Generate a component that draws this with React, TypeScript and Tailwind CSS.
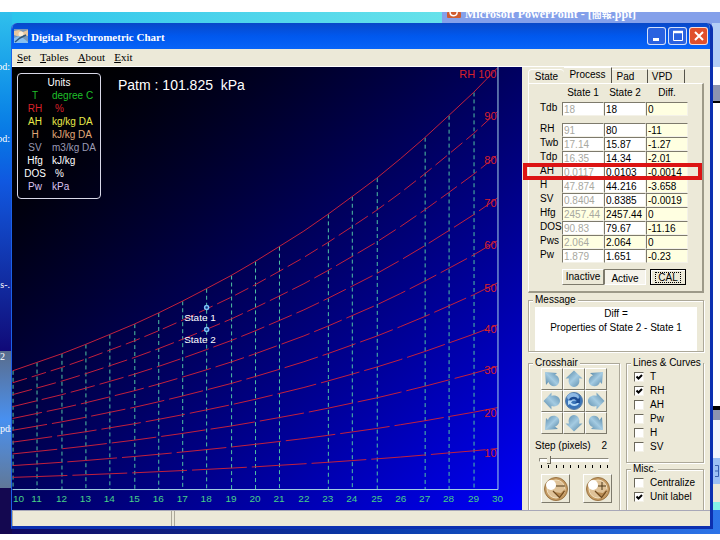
import { useState } from "react";
import type { ReactNode } from "react";
import clsx from "clsx";

const units = [
  { name: "T", unit: "degree C", color: "text-[#1fbf2a]" },
  { name: "RH", unit: "%", color: "text-[#d8222a]" },
  { name: "AH", unit: "kg/kg DA", color: "text-[#e8e84a]" },
  { name: "H", unit: "kJ/kg DA", color: "text-[#e0a878]" },
  { name: "SV", unit: "m3/kg DA", color: "text-[#9a9ab4]" },
  { name: "Hfg", unit: "kJ/kg", color: "text-white" },
  { name: "DOS", unit: "%", color: "text-white" },
  { name: "Pw", unit: "kPa", color: "text-[#dcc4f0]" },
];

const rows = [
  { name: "Tdb", values: ["18", "18", "0"], derived: false },
  { name: "RH", values: ["91", "80", "-11"], derived: false },
  { name: "Twb", values: ["17.14", "15.87", "-1.27"], derived: false },
  { name: "Tdp", values: ["16.35", "14.34", "-2.01"], derived: false },
  { name: "AH", values: ["0.0117", "0.0103", "-0.0014"], derived: false },
  { name: "H", values: ["47.874", "44.216", "-3.658"], derived: false },
  { name: "SV", values: ["0.8404", "0.8385", "-0.0019"], derived: false },
  { name: "Hfg", values: ["2457.44", "2457.44", "0"], derived: true },
  { name: "DOS", values: ["90.83", "79.67", "-11.16"], derived: false },
  { name: "Pws", values: ["2.064", "2.064", "0"], derived: true },
  { name: "Pw", values: ["1.879", "1.651", "-0.23"], derived: false },
];

const rhLevels = [10, 20, 30, 40, 50, 60, 70, 80, 90, 100];
const rhLabelY = [391, 351, 308, 267, 226, 182, 140, 97, 53, 11];
const temps = Array.from({ length: 21 }, (_, i) => i + 10);

const AXIS_Y = 423;

const tempX = (t: number) => Math.round((t - 10) * 24.3);

// humidity ratio at the given temperature and relative humidity
const humidityY = (t: number, rh: number) => {
  const p = (rh / 100) * 610.94 * Math.exp((17.625 * t) / (t + 243.04));
  const w = (0.622 * p) / (101325 - p);
  return AXIS_Y - w / 0.0000643;
};

const curvePoints = (rh: number) =>
  temps.map((t) => `${tempX(t)},${humidityY(t, rh).toFixed(1)}`).join(" ");

const raised =
  "border border-t-white border-l-white border-r-[#7d7a6c] border-b-[#7d7a6c] bg-[#ece9d8]";

function Chart() {
  return (
    <svg
      viewBox="0 0 510 444"
      className="block h-full w-full"
      fontFamily="'Liberation Sans', Arial, sans-serif"
    >
      {temps
        .filter((t) => t !== 22 && t !== 26 && t !== 30)
        .map((t) => (
          <line
            key={t}
            x1={tempX(t) + 0.5}
            x2={tempX(t) + 0.5}
            y1={humidityY(t, 100)}
            y2={AXIS_Y}
            stroke="#4fc3a4"
            strokeDasharray="4 3"
          />
        ))}
      {rhLevels.map((rh) => (
        <polyline
          key={rh}
          points={curvePoints(rh)}
          fill="none"
          stroke="#c4203c"
          strokeDasharray={rh === 100 ? "none" : `${60 - rh / 2} 5`}
          strokeWidth="1"
        />
      ))}
      <path d={`M0 ${AXIS_Y + 0.5}H486.5V0`} fill="none" stroke="#a8d4e4" />
      {rhLevels.map((rh, i) => (
        <text
          key={rh}
          x="485"
          y={rhLabelY[i]}
          fontSize="11"
          fill="#d8202c"
          textAnchor="end"
        >
          {rh === 100 ? "RH 100" : rh}
        </text>
      ))}
      {temps.map((t) => (
        <text
          key={t}
          x={t === 10 ? 6 : tempX(t)}
          y="436"
          fontSize="10"
          fill="#48d088"
          textAnchor="middle"
        >
          {t}
        </text>
      ))}
      {[
        { label: "State 1", y: 241 },
        { label: "State 2", y: 263 },
      ].map((s) => (
        <g key={s.label}>
          <circle cx="194.5" cy={s.y} r="2" fill="#103080" stroke="#7cc0f8" strokeWidth="1.5" />
          <text x="172" y={s.y + 14} fontSize="10" fill="#ffffff">
            {s.label}
          </text>
        </g>
      ))}
    </svg>
  );
}

function UnitsBox() {
  return (
    <div className="absolute top-[6px] left-[5px] h-[126px] w-[84px] rounded border border-[#d8d8e8] text-[10px] leading-[13px]">
      <p className="mt-[2px] text-center text-white">Units</p>
      <dl>
        {units.map((u) => (
          <div key={u.name} className={clsx("grid grid-cols-[34px_1fr]", u.color)}>
            <dt className="text-center">{u.name}</dt>
            <dd className={clsx("whitespace-nowrap", u.unit === "%" && "pl-[3px]")}>{u.unit}</dd>
          </div>
        ))}
      </dl>
    </div>
  );
}

function GroupBox({
  title,
  className,
  children,
}: {
  title: string;
  className?: string;
  children: ReactNode;
}) {
  return (
    <fieldset
      className={clsx(
        "min-w-0 border border-[#aca899] shadow-[1px_1px_0_#fff,inset_1px_1px_0_#fff]",
        className
      )}
    >
      <legend className="ml-1 h-[10px] bg-[#ece9d8] px-[2px] leading-[10px] whitespace-nowrap">{title}</legend>
      {children}
    </fieldset>
  );
}

function ValuesTable() {
  return (
    <table className="ml-[11px] table-fixed border-collapse">
      <thead>
        <tr className="h-[18px]">
          <th className="w-[22px]"></th>
          <th className="w-[42px] font-normal">State 1</th>
          <th className="w-[42px] font-normal">State 2</th>
          <th className="w-[42px] font-normal">Diff.</th>
        </tr>
      </thead>
      <tbody>
        {rows.map((row, i) => (
          <tr key={row.name} className="h-[14px]">
            <th
              scope="row"
              className={clsx(
                "p-0 text-left align-top leading-[12px] font-normal whitespace-nowrap",
                i === 0 && "pb-[9px]"
              )}
            >
              {row.name}
            </th>
            {row.values.map((value, col) => (
              <td key={col} className="p-0 align-top">
                <input
                  readOnly
                  aria-label={`${row.name} ${["State 1", "State 2", "Diff."][col]}`}
                  value={value}
                  className={clsx(
                    "block h-[14px] w-full border border-t-[#7d7a6c] border-l-[#7d7a6c] border-r-[#f4f2e8] border-b-[#f4f2e8] pl-px leading-[12px] outline-none",
                    col === 0 ? "text-[#a8a8a0]" : "text-black",
                    col === 2 || row.derived ? "bg-[#ffffe1]" : "bg-white"
                  )}
                />
              </td>
            ))}
          </tr>
        ))}
      </tbody>
    </table>
  );
}

function ProcessPanel() {
  return (
    <section>
      <div className="flex h-4 items-end" role="tablist">
        <button role="tab" className="h-[14px] w-[36px] rounded-t-sm border-t border-l border-white">
          State
        </button>
        <button
          role="tab"
          aria-selected="true"
          className="h-4 w-[48px] border-t border-r border-t-white border-r-[#55534a] pb-px"
        >
          Process
        </button>
        <button role="tab" className="h-[14px] w-[36px] border-t border-r border-t-white border-r-[#55534a] pr-2">
          Pad
        </button>
        <button role="tab" className="h-[14px] w-[37px] border-t border-r border-t-white border-r-[#55534a] pr-2">
          VPD
        </button>
      </div>
      <div className="h-[210px] border border-t-white border-r-2 border-b-2 border-l-white border-r-[#9c9988] border-b-[#9c9988]">
        <ValuesTable />
        <div className="mt-[6px] ml-[33px] flex h-4 w-[126px]">
          <button className={clsx(raised, "w-[42px]")}>Inactive</button>
          <button className="w-[42px] border border-t-[#7d7a6c] border-r-white border-b-white border-l-[#7d7a6c] bg-[#f6f4ec] pt-[2px]">
            Active
          </button>
          <button className="ml-1 flex w-[36px] items-center justify-center border border-black bg-[#ece9d8] shadow-[inset_1px_1px_0_#fff]">
            <span className="border border-dotted border-black px-[2px] leading-[9px]">CAL</span>
          </button>
        </div>
      </div>
    </section>
  );
}

function ArrowButton({ angle, label }: { angle: number; label: string }) {
  const diagonal = angle % 90 !== 0;
  return (
    <button aria-label={label} className={clsx(raised, "h-[22px] w-[22px]")}>
      <svg viewBox="0 0 20 20" className="h-full w-full">
        <defs>
          <linearGradient id={`arrow-${angle}`} x1="0" y1="0" x2="1" y2="1">
            <stop offset="0" stopColor="#4f7f9e" />
            <stop offset="0.5" stopColor="#a4cbe2" />
            <stop offset="1" stopColor="#5888a8" />
          </linearGradient>
        </defs>
        <g transform={`rotate(${diagonal ? angle - 45 : angle} 10 10)`} fill={`url(#arrow-${angle})`}>
          {diagonal ? (
            <path d="M4 4L17 3L16 15L14 13C13 17.500 7 18.500 4 15.500C1.500 12.500 3 7.500 7 6.500Z" />
          ) : (
            <path d="M10 1.500L18.500 9.500H15C16.500 14 13.500 18 10 18C6.500 18 3.500 14 5 9.500H1.500Z" />
          )}
        </g>
      </svg>
    </button>
  );
}

function ResetButton() {
  return (
    <button aria-label="Reset crosshair" className={clsx(raised, "h-[22px] w-[22px]")}>
      <svg viewBox="0 0 20 20" className="h-full w-full">
        <circle cx="10" cy="10" r="8.500" fill="#3a74b8" stroke="#5b7fa8" />
        <ellipse cx="9" cy="6" rx="6" ry="4" fill="#8db8e4" />
        <path d="M5 9C6 5.500 12 4.500 14 8L16 7V12H11L13 10C11 7.500 8 7.500 7 10Z" fill="#1c4c94" />
        <path d="M15 12C14 15.500 8 16 6 13L4 14V9.500H9L7 11.500C9 13.500 12 13.500 13 12Z" fill="#b8dcf8" />
      </svg>
    </button>
  );
}

function ZoomButton({ plus }: { plus?: boolean }) {
  return (
    <button aria-label={plus ? "Increase" : "Decrease"} className={clsx(raised, "h-[29px] w-[29px]")}>
      <svg viewBox="0 0 27 27" className="h-full w-full">
        <circle cx="14" cy="14" r="11.500" fill="#c49a62" stroke="#9a7444" />
        <circle cx="14" cy="14" r="9" fill="#dfc298" stroke="#f0e0c0" />
        <path d="M12 17L18 23C21 21 23 18 23 14L19 18Z" fill="#b88c54" />
        <path d="M11 16L17.500 22.500L22.500 16" stroke="#6e4a20" strokeWidth="1.200" fill="none" />
        <circle cx="9" cy="10" r="5" fill="#ffffff" />
        <path d={plus ? "M14 11H22M18 7V15" : "M14 11H23"} stroke="#4c3818" />
      </svg>
    </button>
  );
}

function Crosshair() {
  const [step, setStep] = useState(2);

  return (
    <GroupBox title="Crosshair" className="h-[155px] w-[92px] shrink-0">
      <div className="ml-3 grid w-[66px] grid-cols-3">
        <ArrowButton angle={315} label="Up left" />
        <ArrowButton angle={0} label="Up" />
        <ArrowButton angle={45} label="Up right" />
        <ArrowButton angle={270} label="Left" />
        <ResetButton />
        <ArrowButton angle={90} label="Right" />
        <ArrowButton angle={225} label="Down left" />
        <ArrowButton angle={180} label="Down" />
        <ArrowButton angle={135} label="Down right" />
      </div>
      <div className="mt-[5px] flex justify-between pr-3 pl-[6px] leading-[14px]">
        <label htmlFor="step">Step (pixels)</label>
        <output htmlFor="step">{step}</output>
      </div>
      <input
        id="step"
        type="range"
        min="1"
        max="10"
        value={step}
        onChange={(e) => setStep(Number(e.target.value))}
        className="mt-[3px] ml-[10px] block h-2 w-[70px] appearance-none bg-transparent [&::-webkit-slider-runnable-track]:h-1 [&::-webkit-slider-runnable-track]:border [&::-webkit-slider-runnable-track]:border-t-[#8d8a7c] [&::-webkit-slider-runnable-track]:border-l-[#8d8a7c] [&::-webkit-slider-runnable-track]:border-r-white [&::-webkit-slider-runnable-track]:border-b-white [&::-webkit-slider-runnable-track]:bg-white [&::-webkit-slider-thumb]:-mt-[3px] [&::-webkit-slider-thumb]:h-2 [&::-webkit-slider-thumb]:w-1 [&::-webkit-slider-thumb]:appearance-none [&::-webkit-slider-thumb]:border-r [&::-webkit-slider-thumb]:border-b [&::-webkit-slider-thumb]:border-[#6a675a] [&::-webkit-slider-thumb]:bg-[#ece9d8]"
      />
      <div className="mt-px ml-3 flex w-[67px] justify-between">
        {Array.from({ length: 10 }, (_, i) => (
          <span key={i} className="h-[3px] w-px bg-black" />
        ))}
      </div>
      <div className="mt-[6px] ml-3 flex gap-[13px]">
        <ZoomButton />
        <ZoomButton plus />
      </div>
    </GroupBox>
  );
}

function Check({ label, checked }: { label: string; checked?: boolean }) {
  return (
    <label className="flex h-[14px] items-center gap-[6px] pl-[7px] whitespace-nowrap">
      <span className="relative h-[10px] w-[10px]">
        <input
          type="checkbox"
          defaultChecked={checked}
          className="peer block h-[10px] w-[10px] appearance-none border border-t-[#6a675a] border-r-[#f4f2e8] border-b-[#f4f2e8] border-l-[#6a675a] bg-white"
        />
        <svg
          viewBox="0 0 10 10"
          className="pointer-events-none absolute inset-0 hidden peer-checked:block"
        >
          <path d="M2.500 4.500L4.500 6.500L8 3" fill="none" stroke="#000" strokeWidth="2" />
        </svg>
      </span>
      {label}
    </label>
  );
}

function SidePanel() {
  return (
    <aside className="relative flex w-[188px] shrink-0 flex-col overflow-hidden pr-[6px] pl-[6px] text-[10px] leading-[14px]">
      <ProcessPanel />
      <GroupBox title="Message" className="mt-[2px] h-[61px]">
        <p className="mx-[6px] mt-[2px] h-[44px] bg-white text-center">
          Diff =
          <br />
          Properties of State 2 - State 1
        </p>
      </GroupBox>
      <div className="mt-[6px] flex justify-between">
        <Crosshair />
        <div className="w-[78px]">
          <GroupBox title="Lines & Curves" className="h-[105px]">
            <div className="mt-[2px]">
              <Check label="T" checked />
              <Check label="RH" checked />
              <Check label="AH" />
              <Check label="Pw" />
              <Check label="H" />
              <Check label="SV" />
            </div>
          </GroupBox>
          <GroupBox title="Misc." className="mt-px h-[48px]">
            <div className="mt-[2px]">
              <Check label="Centralize" />
              <Check label="Unit label" checked />
            </div>
          </GroupBox>
        </div>
      </div>
      {/* Highlight around the AH row */}
      <div className="pointer-events-none absolute top-[96px] right-2 left-px h-[17px] border-4 border-[#dc1414]" />
    </aside>
  );
}

function TitleBar() {
  const button =
    "flex h-[18px] w-[19px] items-center justify-center rounded-[3px] border border-white/80";
  return (
    <header className="flex h-[26px] shrink-0 items-center bg-linear-to-b from-[#0848c8] via-[#0058ee] to-[#0864f8] pr-[2px] pl-[2px]">
      <svg viewBox="0 0 14 14" className="mr-[3px] h-[14px] w-[14px]">
        <rect width="14" height="14" fill="#7898b8" />
        <path d="M0 2L5 1L9 3L14 1V7L9 6L6 8L0 6Z" fill="#e8c8a0" />
        <circle cx="7" cy="5" r="2.500" fill="#f8ecd8" />
        <path d="M0 9L5 7L9 9L14 13V14H0Z" fill="#88c0f0" />
        <path d="M1 13L6 9L12 6" stroke="#305878" strokeWidth="1.500" fill="none" />
      </svg>
      <h1 className="grow pt-[2px] font-['Liberation_Serif',serif] text-[11px] font-bold text-white">
        Digital Psychrometric Chart
      </h1>
      <div className="flex gap-[2px]">
        <button aria-label="Minimize" className={clsx(button, "bg-[#2a62e0]")}>
          <svg viewBox="0 0 16 16" className="h-4 w-4">
            <path d="M4 11.500H10" stroke="#fff" strokeWidth="3" />
          </svg>
        </button>
        <button aria-label="Maximize" className={clsx(button, "bg-[#2a62e0]")}>
          <svg viewBox="0 0 16 16" className="h-4 w-4">
            <path d="M3.500 4V12.500H12.500V4" stroke="#fff" fill="none" />
            <path d="M3 4H13" stroke="#fff" strokeWidth="2.500" />
          </svg>
        </button>
        <button aria-label="Close" className={clsx(button, "bg-[#e0502c]")}>
          <svg viewBox="0 0 16 16" className="h-4 w-4">
            <path d="M4 4L12 12M12 4L4 12" stroke="#fff" strokeWidth="2" />
          </svg>
        </button>
      </div>
    </header>
  );
}

function MenuBar() {
  return (
    <nav className="flex h-[18px] shrink-0 items-center gap-[9px] border-b border-white pl-[5px] font-['Liberation_Serif',serif] text-[11px]">
      {["Set", "Tables", "About", "Exit"].map((item) => (
        <button key={item}>
          <span className="underline">{item[0]}</span>
          {item.slice(1)}
        </button>
      ))}
    </nav>
  );
}

function Desktop() {
  return (
    <div className="absolute inset-0 flex overflow-hidden bg-linear-to-r from-[#28c4ec] to-[#84f4e8] font-['Liberation_Serif',serif] text-[10px] leading-[12px] text-white">
      {/* Wallpaper and the clipped icon captions left of the window */}
      <div className="flex w-3 flex-col">
        <div className="flex h-[339px] flex-col items-end bg-linear-to-b from-[#30c0ec] via-[#1058e0] to-[#100878] pt-[49px] pr-[2px]">
          <span>pd:</span>
          <span className="mt-[60px]">pd:</span>
          <span className="mt-[134px]">s-.</span>
        </div>
        <div className="h-[137px] bg-linear-to-b from-[#586c8c] via-[#4890f0] to-[#607898]">
          <span className="block">2</span>
          <span className="mt-[60px] block">pds</span>
        </div>
        <div className="grow bg-[#140850]" />
      </div>
      <div className="flex grow items-end">
        <div className="h-6 grow bg-linear-to-r from-[#100860] via-[#0838a8] to-[#2c74e8]" />
      </div>
      {/* Window behind */}
      <div className="absolute top-0 right-0 left-[442px] h-[490px] bg-[#84a0ea]">
        <div className="flex items-start gap-1 pl-[5px]">
          <svg viewBox="0 0 14 6" className="h-[6px] w-[14px]">
            <rect width="14" height="6" rx="1" fill="#d05c30" />
            <path d="M3 0C3 5 11 5 10 0" stroke="#fff" strokeWidth="1.500" fill="none" />
          </svg>
          <p className="-mt-[4px] text-[12px] leading-[12px] font-bold whitespace-nowrap">
            Microsoft PowerPoint - [
            <span className="font-['Noto_Sans_CJK_TC',sans-serif] text-[10px]">簡報</span>
            .ppt]
          </p>
        </div>
        <div className="absolute top-[11px] right-0 bottom-0 flex w-2 flex-col">
          <div className="h-[44px] bg-[#b4cdf6]" />
          <div className="h-[18px] bg-white" />
          <div className="h-[18px] border-b-2 border-black bg-[#8c94b0]" />
          <div className="grow bg-white" />
          <div className="h-[14px] border-t-4 border-black bg-[#8c94b0]" />
          <div className="h-[38px] bg-[#f4f6fc]" />
          <div className="flex h-[26px] items-center justify-end bg-[#9cc0f4]">
            <svg viewBox="0 0 5 12" className="h-3 w-[5px]">
              <path d="M0 0.500H3.500V11.500H0M0 6H3" stroke="#3860b0" fill="none" />
            </svg>
          </div>
          <div className="h-[18px] bg-[#ece9d8]" />
        </div>
      </div>
    </div>
  );
}

export default function App() {
  return (
    <div className="flex h-screen flex-col bg-white pt-3 pb-[6px] font-['Liberation_Sans',Arial,sans-serif] text-black">
      <main className="relative grow overflow-hidden">
        <Desktop />
        <div className="absolute top-[11px] right-[7px] bottom-[5px] left-[11px] flex flex-col overflow-hidden rounded-t-md border-r-[3px] border-b-[3px] border-l border-[#0c30b0] border-l-[#1c60e8] bg-[#ece9d8]">
          <TitleBar />
          <MenuBar />
          <div className="flex min-h-0 grow">
            <section className="relative min-w-0 grow bg-linear-to-br from-black to-[#0000fa]">
              <Chart />
              <UnitsBox />
              <p className="absolute top-[9px] left-[106px] text-[14px] leading-[18px] whitespace-pre text-white">
                Patm : 101.825  kPa
              </p>
            </section>
            <SidePanel />
          </div>
          <footer className="flex h-4 shrink-0 gap-[2px] border-t border-[#a8a8b8]">
            <div className="w-[160px] border-r border-l border-[#aca899]" />
            <div className="grow border-l border-[#aca899]" />
          </footer>
        </div>
      </main>
    </div>
  );
}
